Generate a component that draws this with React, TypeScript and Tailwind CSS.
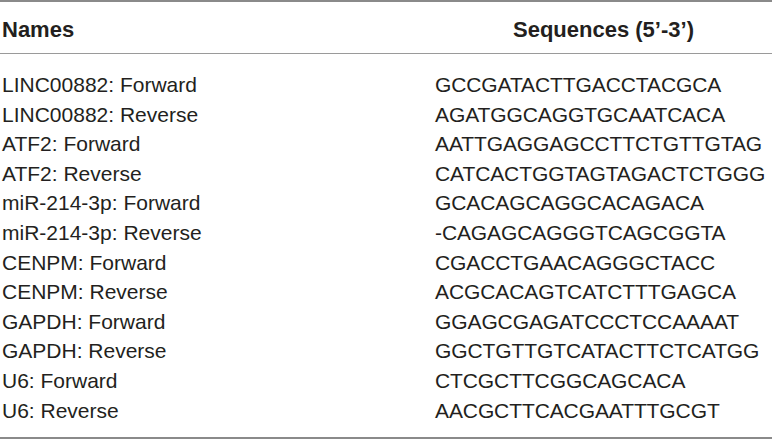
const rows: [string, string][] = [
  ["LINC00882: Forward", "GCCGATACTTGACCTACGCA"],
  ["LINC00882: Reverse", "AGATGGCAGGTGCAATCACA"],
  ["ATF2: Forward", "AATTGAGGAGCCTTCTGTTGTAG"],
  ["ATF2: Reverse", "CATCACTGGTAGTAGACTCTGGG"],
  ["miR-214-3p: Forward", "GCACAGCAGGCACAGACA"],
  ["miR-214-3p: Reverse", "-CAGAGCAGGGTCAGCGGTA"],
  ["CENPM: Forward", "CGACCTGAACAGGGCTACC"],
  ["CENPM: Reverse", "ACGCACAGTCATCTTTGAGCA"],
  ["GAPDH: Forward", "GGAGCGAGATCCCTCCAAAAT"],
  ["GAPDH: Reverse", "GGCTGTTGTCATACTTCTCATGG"],
  ["U6: Forward", "CTCGCTTCGGCAGCACA"],
  ["U6: Reverse", "AACGCTTCACGAATTTGCGT"],
];

export default function App() {
  return (
    <div className="w-[772px] h-[440px] bg-white text-[#231f20] font-['Liberation_Sans',Arial,sans-serif]">
      <div className="border-t-2 border-b-2 border-[#8a8a8a]">
        <div className="grid grid-cols-[435px_1fr] h-[52px] items-center pt-1 border-b border-[#9a9a9a] text-[22px] font-bold">
          <div className="pl-[2px]">Names</div>
          <div className="text-center">Sequences (5’-3’)</div>
        </div>
        <div className="pt-[15px] pb-[12.8px] text-[21px]">
          {rows.map(([name, seq]) => (
            <div key={name} className="grid grid-cols-[435px_1fr] h-[29.6px] items-center">
              <div className="pl-[2px]">{name}</div>
              <div className="tracking-[-0.1px]">{seq}</div>
            </div>
          ))}
        </div>
      </div>
    </div>
  );
}
